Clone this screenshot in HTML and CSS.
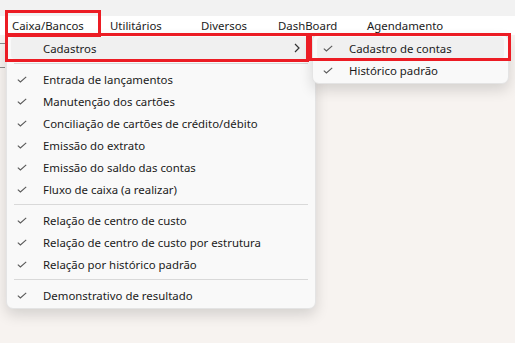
FILE: index.html
```html
<!DOCTYPE html>
<html lang="pt-BR">
<head>
    <meta charset="UTF-8">
    <meta name="viewport" content="width=device-width, initial-scale=1.0">
    <title>Menu Caixa/Bancos</title>
    <link rel="stylesheet" href="styles.css">
</head>
<body>
    <div class="titlebar"></div>
    <div class="menubar">
        <span class="menubar-item">Caixa/Bancos</span>
        <span class="menubar-item">Utilitários</span>
        <span class="menubar-item">Diversos</span>
        <span class="menubar-item">DashBoard</span>
        <span class="menubar-item">Agendamento</span>
    </div>
    <div class="workspace">
        <div class="edge-line edge-line-1"></div>
        <div class="edge-line edge-line-2"></div>
    </div>

    <div class="menu dropdown">
        <div class="menu-item active">
            <span class="check"></span>
            <span class="label">Cadastros</span>
            <svg class="chevron" width="6" height="10" viewBox="0 0 6 10"><path d="M1 1l4 4-4 4" fill="none" stroke="#333" stroke-width="1.2"/></svg>
        </div>
        <div class="separator"></div>
        <div class="menu-item"><span class="check"><svg width="10" height="7" viewBox="0 0 10 7"><path d="M0.8 3.6l2.6 2.4L9.2 0.8" fill="none" stroke="#5a5a5a" stroke-width="1.1"/></svg></span><span class="label">Entrada de lançamentos</span></div>
        <div class="menu-item"><span class="check"><svg width="10" height="7" viewBox="0 0 10 7"><path d="M0.8 3.6l2.6 2.4L9.2 0.8" fill="none" stroke="#5a5a5a" stroke-width="1.1"/></svg></span><span class="label">Manutenção dos cartões</span></div>
        <div class="menu-item"><span class="check"><svg width="10" height="7" viewBox="0 0 10 7"><path d="M0.8 3.6l2.6 2.4L9.2 0.8" fill="none" stroke="#5a5a5a" stroke-width="1.1"/></svg></span><span class="label">Conciliação de cartões de crédito/débito</span></div>
        <div class="menu-item"><span class="check"><svg width="10" height="7" viewBox="0 0 10 7"><path d="M0.8 3.6l2.6 2.4L9.2 0.8" fill="none" stroke="#5a5a5a" stroke-width="1.1"/></svg></span><span class="label">Emissão do extrato</span></div>
        <div class="menu-item"><span class="check"><svg width="10" height="7" viewBox="0 0 10 7"><path d="M0.8 3.6l2.6 2.4L9.2 0.8" fill="none" stroke="#5a5a5a" stroke-width="1.1"/></svg></span><span class="label">Emissão do saldo das contas</span></div>
        <div class="menu-item"><span class="check"><svg width="10" height="7" viewBox="0 0 10 7"><path d="M0.8 3.6l2.6 2.4L9.2 0.8" fill="none" stroke="#5a5a5a" stroke-width="1.1"/></svg></span><span class="label">Fluxo de caixa (a realizar)</span></div>
        <div class="separator"></div>
        <div class="menu-item"><span class="check"><svg width="10" height="7" viewBox="0 0 10 7"><path d="M0.8 3.6l2.6 2.4L9.2 0.8" fill="none" stroke="#5a5a5a" stroke-width="1.1"/></svg></span><span class="label">Relação de centro de custo</span></div>
        <div class="menu-item"><span class="check"><svg width="10" height="7" viewBox="0 0 10 7"><path d="M0.8 3.6l2.6 2.4L9.2 0.8" fill="none" stroke="#5a5a5a" stroke-width="1.1"/></svg></span><span class="label">Relação de centro de custo por estrutura</span></div>
        <div class="menu-item"><span class="check"><svg width="10" height="7" viewBox="0 0 10 7"><path d="M0.8 3.6l2.6 2.4L9.2 0.8" fill="none" stroke="#5a5a5a" stroke-width="1.1"/></svg></span><span class="label">Relação por histórico padrão</span></div>
        <div class="separator"></div>
        <div class="menu-item"><span class="check"><svg width="10" height="7" viewBox="0 0 10 7"><path d="M0.8 3.6l2.6 2.4L9.2 0.8" fill="none" stroke="#5a5a5a" stroke-width="1.1"/></svg></span><span class="label">Demonstrativo de resultado</span></div>
    </div>

    <div class="menu submenu">
        <div class="menu-item active"><span class="check"><svg width="10" height="7" viewBox="0 0 10 7"><path d="M0.8 3.6l2.6 2.4L9.2 0.8" fill="none" stroke="#5a5a5a" stroke-width="1.1"/></svg></span><span class="label">Cadastro de contas</span></div>
        <div class="menu-item"><span class="check"><svg width="10" height="7" viewBox="0 0 10 7"><path d="M0.8 3.6l2.6 2.4L9.2 0.8" fill="none" stroke="#5a5a5a" stroke-width="1.1"/></svg></span><span class="label">Histórico padrão</span></div>
    </div>

    <div class="mark mark-top"></div>
    <div class="mark mark-cadastros"></div>
    <div class="mark mark-contas"></div>
</body>
</html>
```

FILE: styles.css
```css
body {
    margin: 0;
    width: 515px;
    height: 343px;
    overflow: hidden;
    position: relative;
    background-color: #f7f3f0;
    font-family: 'Noto Sans', sans-serif;
    font-size: 11.4px;
    color: #1b1b1b;
}
.titlebar {
    height: 16px;
    background-color: #f2f2f2;
}
.menubar {
    height: 19px;
    background-color: #ffffff;
    display: grid;
    grid-template-columns: 98px 91px 77px 89px auto;
    padding-left: 12px;
    align-items: center;
}
.menubar-item {
    line-height: 19px;
    white-space: nowrap;
}
.workspace {
    padding-top: 8px;
}
.edge-line {
    width: 5px;
    height: 1px;
    background-color: #8a8a8a;
}
.edge-line-2 {
    margin-top: 23px;
}
.menu {
    position: absolute;
    background-color: #f9f9f9;
    border: 1px solid #e4e4e4;
    border-radius: 7px;
    box-shadow: 0px 6px 14px rgba(0, 0, 0, 0.14);
    box-sizing: border-box;
}
.dropdown {
    left: 6px;
    top: 34px;
    width: 310px;
    height: 275px;
    padding: 2px 4px 0 4px;
}
.submenu {
    left: 312px;
    top: 34px;
    width: 197px;
    height: 50px;
    padding: 2px 4px 0 4px;
}
.menu-item {
    height: 22px;
    display: flex;
    align-items: center;
    border-radius: 4px;
    position: relative;
    white-space: nowrap;
}
.menu-item .label {
    padding-top: 1px;
}
.menu-item.active {
    background-color: #f0f0f0;
}
.check {
    width: 32px;
    padding-left: 6px;
    box-sizing: border-box;
    display: flex;
    align-items: center;
}
.chevron {
    position: absolute;
    right: 11px;
    top: 6px;
}
.separator {
    height: 1px;
    background-color: #d9d9d9;
    margin: 4px 3px 4px 3px;
}
.mark {
    position: absolute;
    border: 3px solid #ec1c24;
    box-sizing: border-box;
}
.mark-top {
    left: 5px;
    top: 10px;
    width: 96px;
    height: 27px;
}
.mark-cadastros {
    left: 5px;
    top: 33px;
    width: 304px;
    height: 29px;
}
.mark-contas {
    left: 309px;
    top: 33px;
    width: 202px;
    height: 28px;
}
```
